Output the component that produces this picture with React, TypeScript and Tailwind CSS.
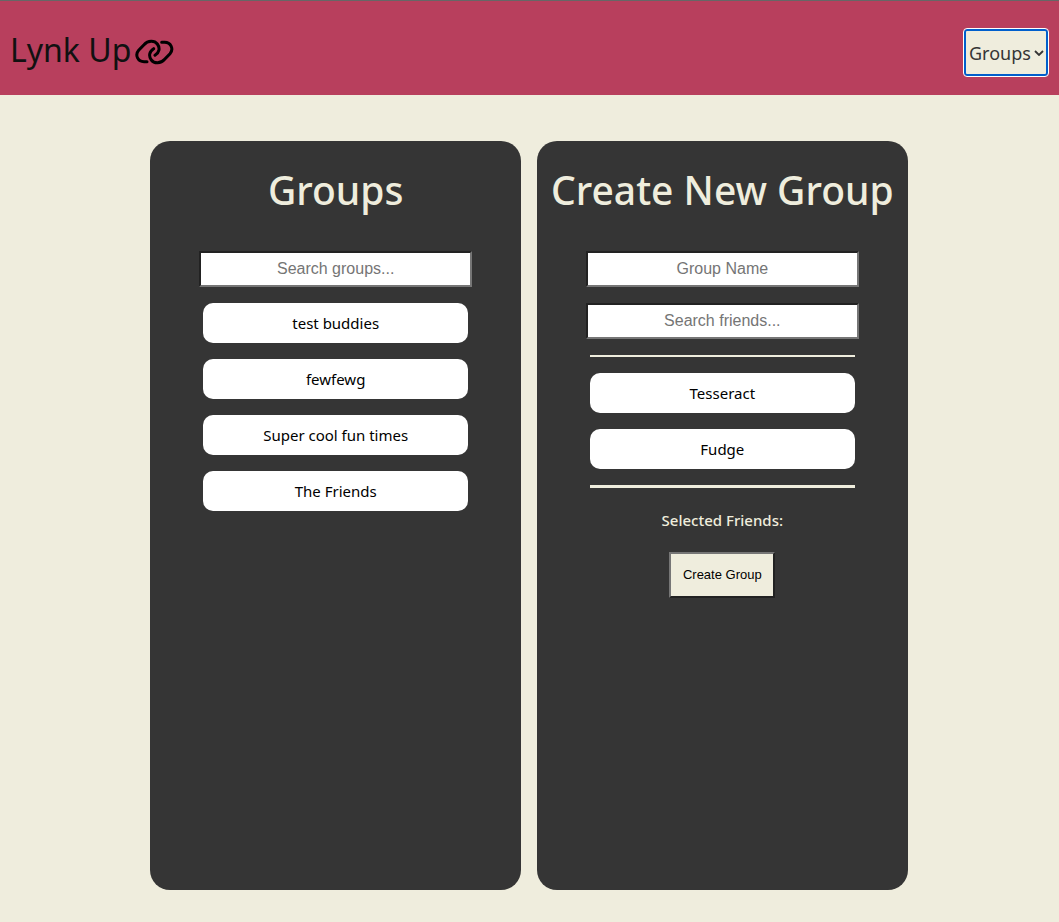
import { useState } from "react";

const groups = ["test buddies", "fewfewg", "Super cool fun times", "The Friends"];
const friends = ["Tesseract", "Fudge"];

const panel =
  "flex w-[35vw] min-h-[calc(100vh-173px)] flex-col items-center gap-4 rounded-[20px] bg-[#353535] pt-6";
const heading =
  "mb-6 h-[46px] whitespace-nowrap text-[39px] leading-[50px] font-medium text-[#efeddd]";
const field =
  "h-9 w-[273px] border-2 border-t-[#222] border-l-[#222] border-r-[#767676] border-b-[#767676] bg-white text-center font-['Liberation_Sans',sans-serif] text-base text-black placeholder:text-[#757575]";
const pill =
  "h-10 w-[25vw] rounded-[10px] bg-white text-center text-[15px] leading-10 text-black";

function LinkIcon() {
  return (
    <svg
      viewBox="0 0 117 78"
      className="mt-1 h-[26px] w-[39px]"
      fill="none"
      stroke="#000"
      strokeWidth="9"
      strokeLinecap="round"
      aria-hidden="true"
    >
      <path d="M36 68H29C8 69 -1 48 11 34L27 17C39 3 59 4 67 15C76 27 73 41 60 49" />
      <path d="M80 10H87C108 9 117 30 105 44L89 61C77 75 57 74 49 63C40 51 43 37 56 29" />
    </svg>
  );
}

export default function App() {
  const [page, setPage] = useState("Groups");

  return (
    <div className="min-h-screen border-r border-[#efeddd] bg-[#efeddd] font-['Noto_Sans',sans-serif]">
      <header className="-mr-px flex h-[95px] items-end justify-between border-t border-[#666] bg-[#b83f5d] pr-[11px] pb-[19px] pl-[10px]">
        <a href="#" className="flex items-center gap-1 text-[32px] leading-[52px] text-[#111]">
          Lynk Up
          <LinkIcon />
        </a>
        <div className="relative flex items-center">
          <select
            aria-label="Page"
            value={page}
            onChange={(e) => setPage(e.target.value)}
            className="h-[47px] w-[84px] appearance-none rounded-[3px] border-2 border-[#005fcc] bg-[#efeddd] pt-0.5 pl-[3px] text-[18px] text-[#353535] outline-1 outline-white"
          >
            <option>Groups</option>
            <option>Friends</option>
            <option>Profile</option>
          </select>
          <svg
            viewBox="0 0 10 6"
            className="pointer-events-none absolute right-1 h-[6px] w-[10px]"
            fill="none"
            stroke="#353535"
            strokeWidth="1.8"
            aria-hidden="true"
          >
            <path d="M1 1l4 4 4-4" />
          </svg>
        </div>
      </header>

      <main className="flex justify-center gap-4 pt-[46px] pb-8">
        <section className={panel}>
          <h1 className={heading}>Groups</h1>
          <input className={field} aria-label="Search groups" placeholder="Search groups..." />
          {groups.map((name) => (
            <button key={name} type="button" className={pill}>
              {name}
            </button>
          ))}
        </section>

        <section className={panel}>
          <h1 className={heading}>Create New Group</h1>
          <input className={field} aria-label="Group name" placeholder="Group Name" />
          <input className={field} aria-label="Search friends" placeholder="Search friends..." />
          <hr className="w-[25vw] border-t-2 border-[#efeddd]" />
          {friends.map((name) => (
            <button key={name} type="button" className={pill}>
              {name}
            </button>
          ))}
          <hr className="w-[25vw] border-t-3 border-[#efeddd]" />
          <p className="py-1 text-[15px] leading-6 font-medium text-[#efeddd]">Selected Friends:</p>
          <button
            type="button"
            className="h-[46px] w-[106px] border-2 border-t-[#767676] border-l-[#767676] border-r-[#222] border-b-[#222] bg-[#efeddd] font-['Liberation_Sans',sans-serif] text-[13px] text-black"
          >
            Create Group
          </button>
        </section>
      </main>
    </div>
  );
}
